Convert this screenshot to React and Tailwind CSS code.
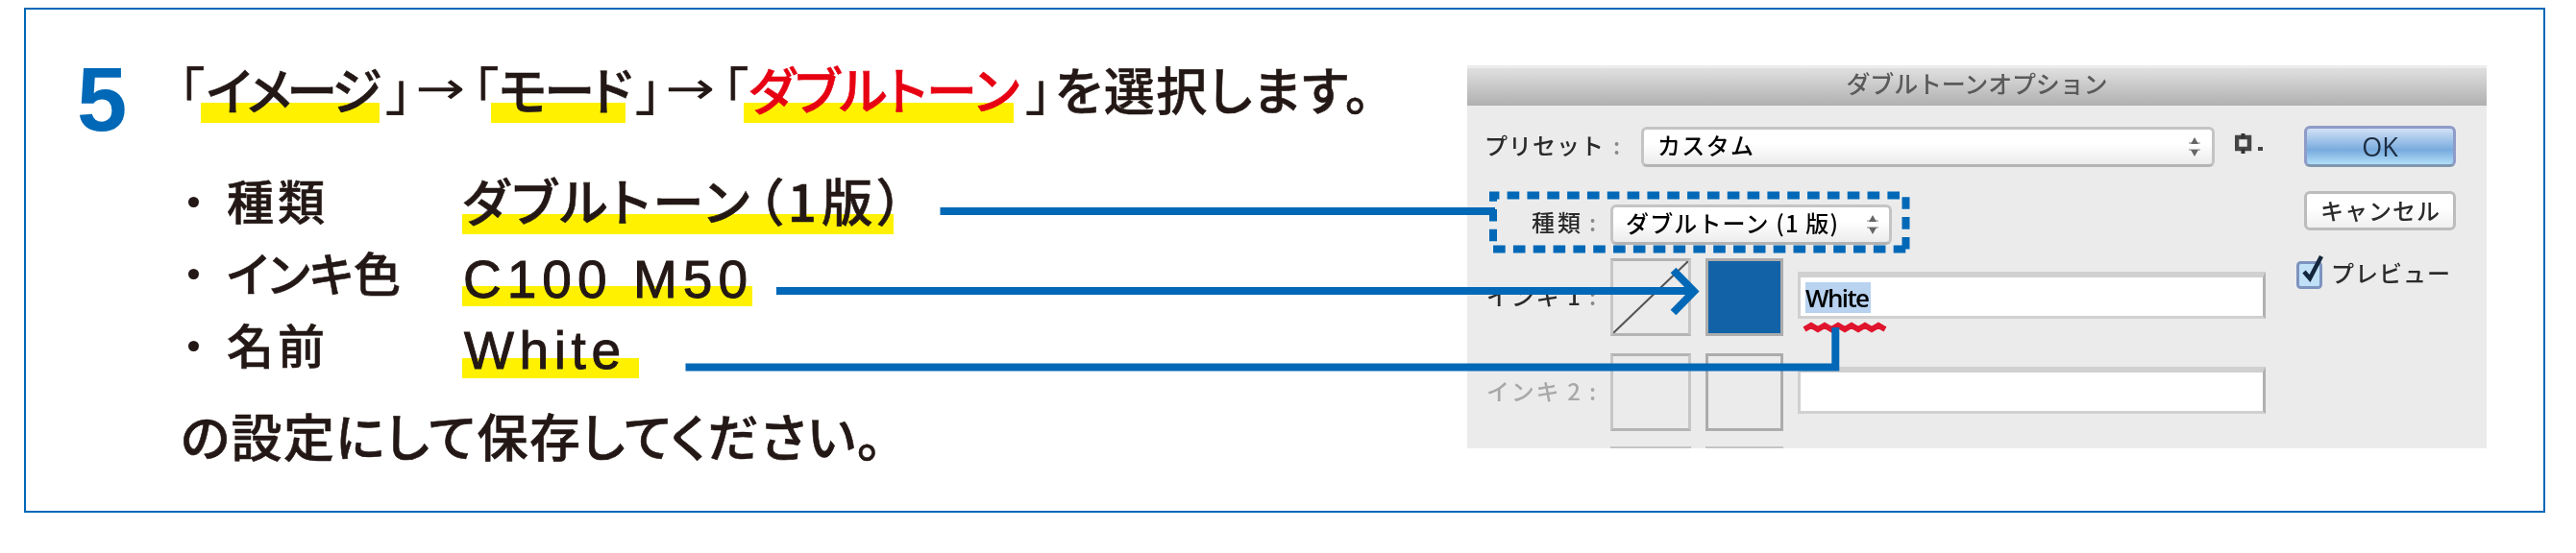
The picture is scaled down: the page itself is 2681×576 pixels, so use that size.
import { useLayoutEffect, useRef, useState } from "react";

// Spreads the letters of a label so that it fills `width` pixels
const Fit = ({ width, className = "", children }) => {
  const ref = useRef(null);
  const [spacing, setSpacing] = useState(0);

  useLayoutEffect(() => {
    const count = [...children].length;
    if (count < 2) return;
    const natural = ref.current.getBoundingClientRect().width;
    setSpacing((width - natural) / (count - 1));
  }, [width, children]);

  return (
    <span className="block shrink-0 whitespace-nowrap" style={{ width }}>
      <span
        ref={ref}
        className={`inline-block ${className}`}
        style={{ letterSpacing: spacing }}
      >
        {children}
      </span>
    </span>
  );
};

const marker =
  "bg-[linear-gradient(transparent_50px,#fff100_50px,#fff100_71px,transparent_71px)]";

const Arrow = () => (
  <span className="flex w-[52px] scale-y-75 justify-center font-['DejaVu_Sans',sans-serif] text-[62px] [-webkit-text-stroke:0px]">
    →
  </span>
);

const Row = ({ label, labelWidth, markWidth, children }) => (
  <li className="flex h-[75px]">
    <span className="ml-[5px] mr-[28px] flex w-[13px] items-center justify-center">
      <span className="size-[11px] rounded-full bg-[#231815]" />
    </span>
    <div className="w-[245px] text-[49px]">
      <Fit width={labelWidth}>{label}</Fit>
    </div>
    <div className={`${marker} ${markWidth} flex`}>{children}</div>
  </li>
);

const Instructions = () => (
  <div className="flex w-[1400px] font-['Noto_Sans_CJK_JP',sans-serif] text-[53px] font-medium leading-[70px] text-[#231815] [-webkit-text-stroke:0.6px] [font-feature-settings:'palt']">
    <div className="w-[137px] pl-[53px] pt-[47px] font-['Liberation_Sans',sans-serif] text-[94px] font-bold leading-[94px] text-[#0068b7] [-webkit-text-stroke:0px]">
      5
    </div>
    <div className="w-[1263px] pl-[22px] pt-[47px]">
      <h1 className="flex h-[75px]">
        <span className="w-[23px] font-normal">「</span>
        <span className={`${marker} flex w-[186px] pl-[6px]`}>
          <Fit width={182}>イメージ</Fit>
        </span>
        <span className="ml-[7px] w-[30px] font-normal">」</span>
        <Arrow />
        <span className="ml-[8px] w-[19px] font-normal">「</span>
        <span className={`${marker} flex w-[140px] pl-[8px]`}>
          <Fit width={139}>モード</Fit>
        </span>
        <span className="ml-[11px] w-[30px] font-normal">」</span>
        <Arrow />
        <span className="ml-[8px] w-[22px] font-normal">「</span>
        <span className={`${marker} flex w-[281px] pl-[5px] text-[#e60012]`}>
          <Fit width={282}>ダブルトーン</Fit>
        </span>
        <span className="ml-[13px] w-[30px] font-normal">」</span>
        <Fit width={328}>を選択します。</Fit>
      </h1>

      <ul className="mt-[41px] ml-[4px]">
        <Row label="種類" labelWidth={102} markWidth="w-[449px]">
          <div className="mr-[8px]">
            <Fit width={299}>ダブルトーン</Fit>
          </div>
          <Fit width={152}>（1版）</Fit>
        </Row>
        <Row label="インキ色" labelWidth={181} markWidth="w-[302px]">
          <Fit
            width={297}
            className="pl-[1px] pt-[8px] font-['Liberation_Sans',sans-serif] text-[55px] [-webkit-text-stroke:1px]"
          >
            C100 M50
          </Fit>
        </Row>
        <Row label="名前" labelWidth={102} markWidth="w-[184px]">
          <Fit
            width={165}
            className="pl-[2px] pt-[7px] font-['Liberation_Sans',sans-serif] text-[55px] [-webkit-text-stroke:1px]"
          >
            White
          </Fit>
        </Row>
      </ul>

      <p className="mt-[20px] ml-[2px]">
        <Fit width={730}>の設定にして保存してください。</Fit>
      </p>
    </div>
  </div>
);

const Stepper = () => (
  <svg viewBox="0 0 12 22" className="mt-[5px] h-[22px] w-3 fill-[#666]">
    <path d="M6 1l4 7H2zM6 21l4-7H2z" />
    <path d="M0 6h12v2H0zM0 13h12v2H0z" opacity="0.4" />
  </svg>
);

const Swatches = ({ color, none }) => (
  <>
    <div className="h-[81px] w-[84px] shrink-0 border-[3px] border-[#c6c6c6] border-y-[#b4b4b4]">
      {none && (
        <svg viewBox="0 0 78 75" className="size-full">
          <path d="M0 75L78 0" stroke="#555" strokeWidth="2" />
        </svg>
      )}
    </div>
    <div
      className={`ml-[15px] h-[81px] w-[81px] shrink-0 border-[3px] border-[#acacac] ${color}`}
    />
  </>
);

const field =
  "ml-[15px] mt-[14px] h-[49px] w-[487px] border-[3px] border-t-[6px] border-[#d0d0d0] border-r-[#b0b0b0] bg-white";

const select =
  "flex h-[42px] items-center justify-between rounded-[6px] border-[3px] border-[#c4c4c4] border-b-[#b4b4b4] bg-linear-to-b from-white from-40% to-[#ececec] pb-[5px] text-black";

const Dialog = () => (
  <div className="mt-[58px] flex h-[399px] w-[1061px] flex-col overflow-hidden bg-[#ebebeb] font-['Noto_Sans_CJK_JP',sans-serif] text-2xl font-medium leading-[37px] text-[#2a2a2a] blur-[0.7px]">
    <div className="flex h-[42px] shrink-0 justify-center border-t-[3px] border-[#ececec] bg-linear-to-b from-[#e0e0e0] to-[#b0b0b0] text-[25px] leading-[30px] text-[#5a5a5a]">
      <Fit width={272}>ダブルトーンオプション</Fit>
    </div>

    <div className="flex grow">
      <div className="w-[832px] shrink-0">
        <div className="flex pt-[22px]">
          <div className="flex w-[181px] pl-[18px]">
            <Fit width={124}>プリセット</Fit>
            <span className="pl-[10px] text-[#888]">:</span>
          </div>
          <div className={`${select} w-[597px] pl-[14px] pr-3`}>
            <Fit width={100}>カスタム</Fit>
            <Stepper />
          </div>
          <svg viewBox="0 0 30 22" className="ml-[21px] mt-[7px] h-[22px] w-[30px]">
            <path d="M2 4h13v12H2z" fill="none" stroke="#444" strokeWidth="4.5" />
            <path d="M6.500 0h4v5h-4zM6.500 16h4v5h-4z" fill="#333" />
            <path d="M24 14h5v4h-5z" fill="#444" />
          </svg>
        </div>

        <div className="mt-[39px] flex">
          <div className="flex w-[149px] pl-[67px] leading-[36px]">
            <Fit width={51}>種類</Fit>
            <span className="pl-[9px] text-[#888]">:</span>
          </div>
          <div className={`${select} w-[293px] pl-[13px] pr-[11px]`}>
            <Fit width={221}>ダブルトーン (1 版)</Fit>
            <Stepper />
          </div>
        </div>

        <div className="mt-[14px] flex h-[81px]">
          <div className="flex w-[149px] pl-[20px] pt-[20px]">
            <Fit width={98}>インキ 1</Fit>
            <span className="pl-[9px] text-[#888]">:</span>
          </div>
          <Swatches none color="bg-[#1262a8]" />
          <div className={field}>
            <div className="ml-[5px] mt-[5px] h-[32px] w-[68px] bg-[#b8d2f0] leading-[32px] text-black">
              <Fit
                width={67}
                className="font-['Open_Sans',sans-serif] text-[26px] font-semibold"
              >
                White
              </Fit>
            </div>
          </div>
        </div>

        <div className="mt-[18px] flex h-[81px]">
          <div className="flex w-[149px] pl-[20px] pt-[20px] text-[#a8a8a8]">
            <Fit width={98}>インキ 2</Fit>
            <span className="pl-[9px]">:</span>
          </div>
          <Swatches color="bg-transparent" />
          <div className={field} />
        </div>

        <div className="mt-[16px] flex h-[2px] gap-[15px] pl-[149px]">
          <div className="w-[84px] bg-[#c4c4c4]" />
          <div className="w-[81px] bg-[#c4c4c4]" />
        </div>
      </div>

      <div className="w-[229px] shrink-0 pl-[31px] pt-[21px]">
        <div className="ml-[8px] h-[43px] w-[158px] rounded-[6px] border-[3px] border-[#8f9bc8] border-b-[#7f97ae] bg-linear-to-b from-[#d2e1f5] via-[#78abde] via-60% to-[#b2def8] text-center font-['Open_Sans',sans-serif] text-[27px] leading-[37px] text-[#1c2c40]">
          OK
        </div>
        <div className="ml-[8px] mt-[25px] flex h-[41px] w-[158px] justify-center rounded-[6px] border-[3px] border-[#bcbcbc] bg-linear-to-b from-white from-40% to-[#f0f0f0] leading-[33px]">
          <Fit width={124}>キャンセル</Fit>
        </div>
        <div className="mt-[26px] flex">
          <svg viewBox="0 0 28 35" className="h-[35px] w-[28px]">
            <rect x="1.500" y="7.500" width="24" height="26" rx="3" fill="#bfe0f7" stroke="#7d93bf" strokeWidth="3" />
            <path d="M8 17l6 7L26 1" fill="none" stroke="#14263c" strokeWidth="4.500" />
          </svg>
          <div className="pl-[8px] leading-[36px]">
            <Fit width={124}>プレビュー</Fit>
          </div>
        </div>
      </div>
    </div>
  </div>
);

// Connectors that tie each setting to its control in the dialog
const Connectors = () => (
  <svg
    viewBox="0 0 2681 576"
    className="pointer-events-none absolute left-0 top-0 h-[576px] w-[2681px] fill-none stroke-[#0068b7] stroke-8"
  >
    <path
      d="M1878 343l7-4 7 4 7-4 7 4 7-4 7 4 7-4 7 4 7-4 7 4 7-4 7 4"
      className="stroke-[#e0142d] stroke-6"
    />
    <path d="M978.5 220H1556" />
    <path d="M1983.5 259.5V203.5H1554V259.5Z" strokeDasharray="12.6 8.23" />
    <path d="M808 303H1762M1741.500 281.500L1763 303.500L1741.500 325.500" />
    <path d="M713.5 382.5H1910.3V341" />
  </svg>
);

const App = () => {
  return (
    <main className="relative h-[576px] w-[2681px] overflow-hidden bg-white pl-[25px] pt-2">
      <section className="flex h-[526px] w-[2624px] border-2 border-[#0068b7]">
        <Instructions />
        <div className="pl-[100px]">
          <Dialog />
        </div>
      </section>
      <Connectors />
    </main>
  );
};

export default App;
